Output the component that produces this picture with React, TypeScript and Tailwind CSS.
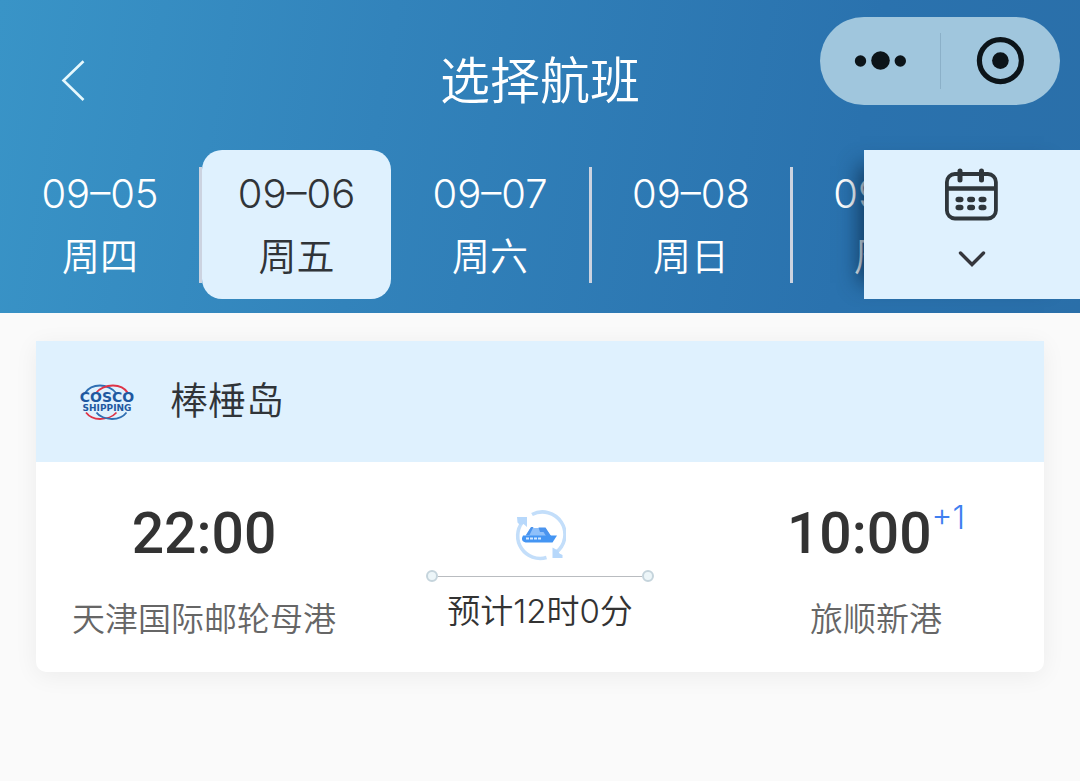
import React from "react";

type Day = { date: string; weekday: string };

const days: Day[] = [
  { date: "09–05", weekday: "周四" },
  { date: "09–06", weekday: "周五" },
  { date: "09–07", weekday: "周六" },
  { date: "09–08", weekday: "周日" },
  { date: "09–09", weekday: "周一" },
];

function BackIcon() {
  return (
    <svg width="24" height="42" viewBox="0 0 24 42" fill="none" stroke="#e6f8fd" strokeWidth="2.6" aria-hidden="true">
      <path d="M22.5 1.2 2.5 20.5l20 19.5" />
    </svg>
  );
}

function Capsule() {
  return (
    <div className="absolute top-[17px] right-5 flex h-[88px] w-60 items-center rounded-full bg-[#a0c6dd]">
      <button type="button" aria-label="更多" className="flex flex-1 items-center justify-center">
        <svg width="52" height="20" viewBox="0 0 52 20" fill="#0c1419" aria-hidden="true">
          <circle cx="6.5" cy="10" r="5.7" />
          <circle cx="26.500" cy="9.500" r="9.300" />
          <circle cx="46.300" cy="10" r="5.7" />
        </svg>
      </button>
      <span className="h-14 w-px bg-[#8bb0c8]" />
      <button type="button" aria-label="关闭" className="flex flex-1 items-center justify-center">
        <svg width="48" height="48" viewBox="0 0 48 48" aria-hidden="true">
          <circle cx="24.400" cy="23.600" r="21" fill="none" stroke="#0c1419" strokeWidth="5.2" />
          <circle cx="24.400" cy="23.600" r="8.3" fill="#0c1419" />
        </svg>
      </button>
    </div>
  );
}

function CalendarIcon() {
  return (
    <svg width="54" height="54" viewBox="0 0 54 54" fill="none" stroke="#2f363b" strokeWidth="3.8" strokeLinecap="round" aria-hidden="true">
      <rect x="1.9" y="6" width="49" height="44.500" rx="8" />
      <path d="M2 20.500h48" strokeWidth="4.400" strokeLinecap="butt" />
      <path d="M15 3v9M36.500 3v9" strokeWidth="5" />
      <g strokeWidth="5.400">
        <path d="M13.200 31.500h2.600M24.800 31.500h2.600M36.200 31.500h2.600M13.200 39.500h2.600M24.800 39.500h2.600M36.200 39.500h2.600" />
      </g>
    </svg>
  );
}

function DayLabel({ day }: { day: Day }) {
  return (
    <span className="flex flex-1 flex-col items-center gap-3">
      <span className="text-[40px] leading-[50px]">{day.date}</span>
      <span className="text-[38px] leading-[50px]">{day.weekday}</span>
    </span>
  );
}

function DayTab({ day, active }: { day: Day; active: boolean }) {
  if (active) {
    return (
      <button
        type="button"
        aria-pressed="true"
        className="flex w-[189px] shrink-0 items-center rounded-[20px] bg-[#dff1fe] text-[#303438]"
      >
        <DayLabel day={day} />
      </button>
    );
  }
  return (
    <button type="button" aria-pressed="false" className="flex w-[201px] shrink-0 items-center text-white">
      <DayLabel day={day} />
      <span className="h-[116px] w-[3px] bg-[#ccd3e0]" />
    </button>
  );
}

function CoscoLogo() {
  return (
    <svg width="62" height="40" viewBox="0 0 62 40" aria-label="COSCO SHIPPING" role="img">
      <g fill="none" strokeWidth="1.8">
        <path d="M9 11C12 6.500 18 3.500 24 3.500S37 6.500 40 11" stroke="#2f6fb3" />
        <path d="M20 11C23 6.500 30 3.500 37 3.500S49 6.500 52 11" stroke="#df3346" />
        <path d="M10 30.500C13 34.500 18 37 24 37S37 34.500 40.500 30.500" stroke="#df3346" />
        <path d="M20.500 30.500C23 34.500 30 37 36 37S47.500 34.500 50.500 30.500" stroke="#2f6fb3" />
      </g>
      <g fill="#1e58a0" textAnchor="middle" className="font-['DejaVu_Sans'] font-bold">
        <text x="31" y="20" fontSize="14">COSCO</text>
        <text x="31" y="29" fontSize="9">SHIPPING</text>
      </g>
    </svg>
  );
}

function ShipIcon() {
  return (
    <svg width="52" height="52" viewBox="0 0 52 52" fill="none" aria-hidden="true">
      <g stroke="#c3defa" strokeWidth="3.6">
        <path d="M18 4.500A22.500 22.500 0 0 1 42.500 42" />
        <path d="M32.500 47.500A22.500 22.500 0 0 1 8.500 12" />
      </g>
      <path d="M3 7h10v10L9.500 14 6 15 3.500 12.500z" fill="#b7d8fb" />
      <path d="M38.500 37.500V48H48.500V45L45.500 43.500 44 40.500z" fill="#b7d8fb" />
      <path d="M11.500 26 16.500 18H31l6 8z" fill="#8fc0fa" />
      <path d="M12 25 17 17h2.500L15.500 25zM24.500 17.500h7l5.500 8.500H32l-2.500-4H26z" fill="#4b94ee" />
      <path d="M9 25.500H43L38.500 32.500H11.500Q7.500 31.500 8 28z" fill="#4495f3" />
      <path d="M12 28.500h15" stroke="#d5e9ff" strokeWidth="2" strokeDasharray="3 1" />
    </svg>
  );
}

export default function App() {
  return (
    <div className="min-h-screen bg-[#fafafa] font-['Inter','Noto_Sans_CJK_SC',sans-serif] font-[350]">
      <header className="relative bg-[linear-gradient(100deg,#3994c7_0%,#3283bb_35%,#2a72ae_78%,#2a6fa9_100%)] pb-3.5">
        <div className="grid grid-cols-[1fr_auto_1fr] items-center pt-[46px] pb-[34px]">
          <button type="button" aria-label="返回" className="ml-[61px] justify-self-start">
            <BackIcon />
          </button>
          <h1 className="text-[50px] leading-[70px] text-white">选择航班</h1>
        </div>
        <Capsule />

        <nav aria-label="日期" className="flex h-[149px]">
          <div className="flex min-w-0 flex-1 overflow-hidden pl-px">
            {days.map((day, i) => (
              <DayTab key={day.date} day={day} active={i === 1} />
            ))}
          </div>
          <button
            type="button"
            aria-label="选择日期"
            className="relative flex w-1/5 shrink-0 flex-col items-center gap-7 bg-[#dff1fe] pt-[18px] shadow-[-20px_0_20px_-16px_rgba(10,40,70,0.8)]"
          >
            <CalendarIcon />
            <svg width="28" height="18" viewBox="0 0 28 18" fill="none" stroke="#35363c" strokeWidth="3.4" strokeLinecap="round" aria-hidden="true">
              <path d="M2.500 3l11.500 11.500L25.500 3" />
            </svg>
          </button>
        </nav>
      </header>

      <main className="px-9 pt-7">
        <article className="overflow-hidden rounded-b-[10px] bg-white shadow-[0_4px_24px_rgba(0,0,0,0.06)]">
          <div className="flex h-[121px] items-center gap-8 bg-[#dff1fe] px-10">
            <CoscoLogo />
            <h2 className="pb-1 text-[38px] leading-[50px] text-[#303438]">棒棰岛</h2>
          </div>

          <div className="grid grid-cols-3 pt-9 pb-7">
            <section className="flex flex-col items-center gap-6">
              <p className="font-['Roboto',sans-serif] text-[57px] leading-[72px] font-medium text-[#333333]">22:00</p>
              <p className="text-[33px] leading-[50px] text-[#666666]">天津国际邮轮母港</p>
            </section>

            <section className="flex flex-col items-center pt-3">
              <ShipIcon />
              <div className="mt-2 flex items-center">
                <span className="size-3 rounded-full border-2 border-[#c5d4dc] bg-[#edf6f9]" />
                <span className="h-px w-[204px] bg-[#b9bcc0]" />
                <span className="size-3 rounded-full border-2 border-[#c5d4dc] bg-[#edf6f9]" />
              </div>
              <p className="mt-1 text-[33px] leading-[50px] text-[#333333]">预计12时0分</p>
            </section>

            <section className="flex flex-col items-center gap-6">
              <div className="flex items-start">
                <p className="font-['Roboto',sans-serif] text-[57px] leading-[72px] font-medium text-[#333333]">10:00</p>
                <span className="text-[32px] leading-10 text-[#3f7ff0]">+1</span>
              </div>
              <p className="text-[33px] leading-[50px] text-[#666666]">旅顺新港</p>
            </section>
          </div>
        </article>
      </main>
    </div>
  );
}
